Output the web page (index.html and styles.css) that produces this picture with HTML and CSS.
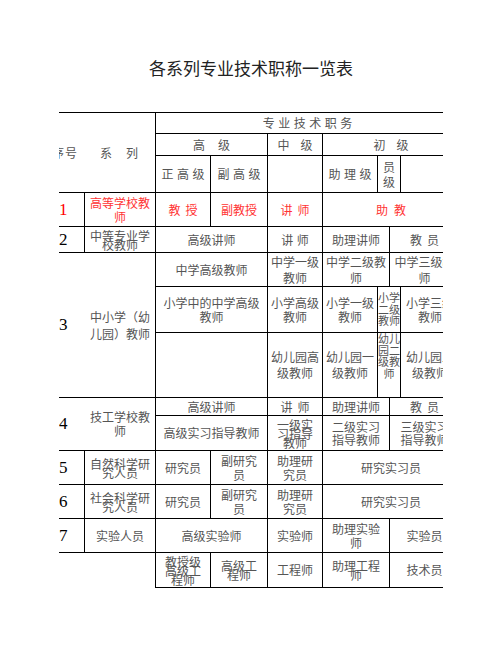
FILE: index.html
```html
<!DOCTYPE html>
<html lang="zh-CN">
<head>
<meta charset="utf-8">
<title>各系列专业技术职称一览表</title>
<link rel="stylesheet" href="styles.css">
</head>
<body>
<div class="page">
  <h1 class="title">各系列专业技术职称一览表</h1>
  <div class="clip">
    <div class="sheet">
      <!-- header -->
      <div class="c gc-1-3 gr-1-4 hl"><span class="h-no">序号</span><span class="h-xl">系列</span></div>
      <div class="c gc-3-10 gr-1 s3">专业技术职务</div>
      <div class="c gc-3-5 gr-2 s13">高级</div>
      <div class="c gc-5-6 gr-2 s11">中级</div>
      <div class="c gc-6-10 gr-2 s11">初级</div>
      <div class="c gc-3-4 gr-3 s3">正高级</div>
      <div class="c gc-4-5 gr-3 s3">副高级</div>
      <div class="c gc-5-6 gr-3"></div>
      <div class="c gc-6-7 gr-3 s3">助理级</div>
      <div class="c gc-7-9 gr-3 l15">员<br>级</div>
      <div class="c gc-9-10 gr-3"></div>

      <!-- 1 -->
      <div class="c gc-1-2 gr-4 num red">1</div>
      <div class="c gc-2-3 gr-4 red l14">高等学校教<br>师</div>
      <div class="c gc-3-4 gr-4 red s5">教授</div>
      <div class="c gc-4-5 gr-4 red">副教授</div>
      <div class="c gc-5-6 gr-4 red s5">讲师</div>
      <div class="c gc-6-10 gr-4 red s6">助教</div>

      <!-- 2 -->
      <div class="c gc-1-2 gr-5 num">2</div>
      <div class="c gc-2-3 gr-5 l9">中等专业学<br>校教师</div>
      <div class="c gc-3-5 gr-5">高级讲师</div>
      <div class="c gc-5-6 gr-5 s3">讲师</div>
      <div class="c gc-6-8 gr-5">助理讲师</div>
      <div class="c gc-8-10 gr-5 s5">教员</div>

      <!-- 3 -->
      <div class="c gc-1-2 gr-6-9 num nr">3</div>
      <div class="c gc-2-3 gr-6-9 l17">中小学（幼<br>儿园）教师</div>
      <div class="c gc-3-5 gr-6">中学高级教师</div>
      <div class="c gc-5-6 gr-6">中学一级<br>教师</div>
      <div class="c gc-6-8 gr-6">中学二级教<br>师</div>
      <div class="c gc-8-10 gr-6">中学三级教<br>师</div>
      <div class="c gc-3-5 gr-7 l14">小学中的中学高级<br>教师</div>
      <div class="c gc-5-6 gr-7 l14">小学高级<br>教师</div>
      <div class="c gc-6-7 gr-7 l14">小学一级<br>教师</div>
      <div class="c gc-7-9 gr-7 narrow">小学<br>二级<br>教师</div>
      <div class="c gc-9-10 gr-7 l14">小学三级<br>教师</div>
      <div class="c gc-3-5 gr-8"></div>
      <div class="c gc-5-6 gr-8">幼儿园高<br>级教师</div>
      <div class="c gc-6-7 gr-8">幼儿园一<br>级教师</div>
      <div class="c gc-7-9 gr-8 narrow top">幼儿<br>园二<br>级教<br>师</div>
      <div class="c gc-9-10 gr-8">幼儿园三<br>级教师</div>

      <!-- 4 -->
      <div class="c gc-1-2 gr-9-11 num nr">4</div>
      <div class="c gc-2-3 gr-9-11 l14">技工学校教<br>师</div>
      <div class="c gc-3-5 gr-9">高级讲师</div>
      <div class="c gc-5-6 gr-9 s5">讲师</div>
      <div class="c gc-6-8 gr-9">助理讲师</div>
      <div class="c gc-8-10 gr-9 s5">教员</div>
      <div class="c gc-3-5 gr-10">高级实习指导教师</div>
      <div class="c gc-5-6 gr-10 l9">一级实<br>习指导<br>教师</div>
      <div class="c gc-6-8 gr-10 l13">二级实习<br>指导教师</div>
      <div class="c gc-8-10 gr-10 l13">三级实习<br>指导教师</div>

      <!-- 5 -->
      <div class="c gc-1-2 gr-11 num">5</div>
      <div class="c gc-2-3 gr-11 l9">自然科学研<br>究人员</div>
      <div class="c gc-3-4 gr-11">研究员</div>
      <div class="c gc-4-5 gr-11 l14">副研究<br>员</div>
      <div class="c gc-5-6 gr-11 l14">助理研<br>究员</div>
      <div class="c gc-6-10 gr-11">研究实习员</div>

      <!-- 6 -->
      <div class="c gc-1-2 gr-12 num">6</div>
      <div class="c gc-2-3 gr-12 l9">社会科学研<br>究人员</div>
      <div class="c gc-3-4 gr-12">研究员</div>
      <div class="c gc-4-5 gr-12 l14">副研究<br>员</div>
      <div class="c gc-5-6 gr-12 l14">助理研<br>究员</div>
      <div class="c gc-6-10 gr-12">研究实习员</div>

      <!-- 7 -->
      <div class="c gc-1-2 gr-13 num">7</div>
      <div class="c gc-2-3 gr-13">实验人员</div>
      <div class="c gc-3-5 gr-13">高级实验师</div>
      <div class="c gc-5-6 gr-13">实验师</div>
      <div class="c gc-6-8 gr-13 l14">助理实验<br>师</div>
      <div class="c gc-8-10 gr-13">实验员</div>

      <!-- 8 -->
      <div class="c gc-1-3 gr-14 nb"></div>
      <div class="c gc-3-4 gr-14 l9">教授级<br>高级工<br>程师</div>
      <div class="c gc-4-5 gr-14 l9">高级工<br>程师</div>
      <div class="c gc-5-6 gr-14">工程师</div>
      <div class="c gc-6-8 gr-14 l9">助理工程<br>师</div>
      <div class="c gc-8-10 gr-14">技术员</div>
    </div>
  </div>
</div>
</body>
</html>
```

FILE: styles.css
```css
html, body {
  margin: 0;
  padding: 0;
  background: #fff;
}

body {
  font-family: "Noto Sans CJK SC", "Noto Sans", sans-serif;
  color: #555;
}

.page {
  width: 502px;
  height: 649px;
  padding-top: 57px;
  box-sizing: border-box;
  overflow: hidden;
}

.title {
  margin: 0;
  font-size: 17px;
  font-weight: 400;
  line-height: 21px;
  text-align: center;
  color: #222;
}

.clip {
  margin: 34px 0 0 59px;
  width: 384px;
  overflow: hidden;
}

.sheet {
  display: grid;
  width: 401px;
  grid-template-columns: 26px 71px 55px 57px 55px 55px 12px 11px 59px;
  grid-template-rows: 21px 22px 37px 34px 26px 34px 46px 65px 18px 35px 34px 34px 34px 35px;
  border-top: 1px solid #000;
  font-size: 12px;
}

.c {
  border-right: 1px solid #000;
  border-bottom: 1px solid #000;
  display: flex;
  align-items: center;
  justify-content: center;
  text-align: center;
  white-space: nowrap;
  line-height: 16px;
  min-width: 0;
}

.nr { border-right: none; }
.nb { border-bottom: none; }

.num {
  justify-content: flex-start;
  font-family: "Liberation Serif", serif;
  font-size: 17px;
  color: #000;
}

.red { color: #f33; }
.num.red { color: #f00; }

.hl { justify-content: flex-start; }
.h-no { margin-left: -7px; letter-spacing: 1px; }
.h-xl { margin-left: 22px; letter-spacing: 14px; }

.s3 { letter-spacing: 3.5px; padding-left: 3.5px; }
.s5 { letter-spacing: 5px; padding-left: 5px; }
.s6 { letter-spacing: 6px; padding-left: 6px; }
.s11 { letter-spacing: 11px; padding-left: 11px; }
.s13 { letter-spacing: 13px; padding-left: 13px; }

.l9 { line-height: 9px; }
.l13 { line-height: 13px; }
.l14 { line-height: 14px; }
.l15 { line-height: 15px; }
.l17 { line-height: 17px; }

.narrow {
  font-size: 11px;
  line-height: 11.5px;
}
.top { align-items: flex-start; }

/* grid placement */
.gc-1-2 { grid-column: 1 / 2; }
.gc-1-3 { grid-column: 1 / 3; }
.gc-2-3 { grid-column: 2 / 3; }
.gc-3-4 { grid-column: 3 / 4; }
.gc-3-5 { grid-column: 3 / 5; }
.gc-3-10 { grid-column: 3 / 10; }
.gc-4-5 { grid-column: 4 / 5; }
.gc-5-6 { grid-column: 5 / 6; }
.gc-6-7 { grid-column: 6 / 7; }
.gc-6-8 { grid-column: 6 / 8; }
.gc-6-10 { grid-column: 6 / 10; }
.gc-7-9 { grid-column: 7 / 9; }
.gc-8-10 { grid-column: 8 / 10; }
.gc-9-10 { grid-column: 9 / 10; }

.gr-1 { grid-row: 1 / 2; }
.gr-2 { grid-row: 2 / 3; }
.gr-3 { grid-row: 3 / 4; }
.gr-1-4 { grid-row: 1 / 4; }
.gr-4 { grid-row: 4 / 5; }
.gr-5 { grid-row: 5 / 6; }
.gr-6 { grid-row: 6 / 7; }
.gr-7 { grid-row: 7 / 8; }
.gr-8 { grid-row: 8 / 9; }
.gr-6-9 { grid-row: 6 / 9; }
.gr-9 { grid-row: 9 / 10; }
.gr-10 { grid-row: 10 / 11; }
.gr-9-11 { grid-row: 9 / 11; }
.gr-11 { grid-row: 11 / 12; }
.gr-12 { grid-row: 12 / 13; }
.gr-13 { grid-row: 13 / 14; }
.gr-14 { grid-row: 14 / 15; }
```
